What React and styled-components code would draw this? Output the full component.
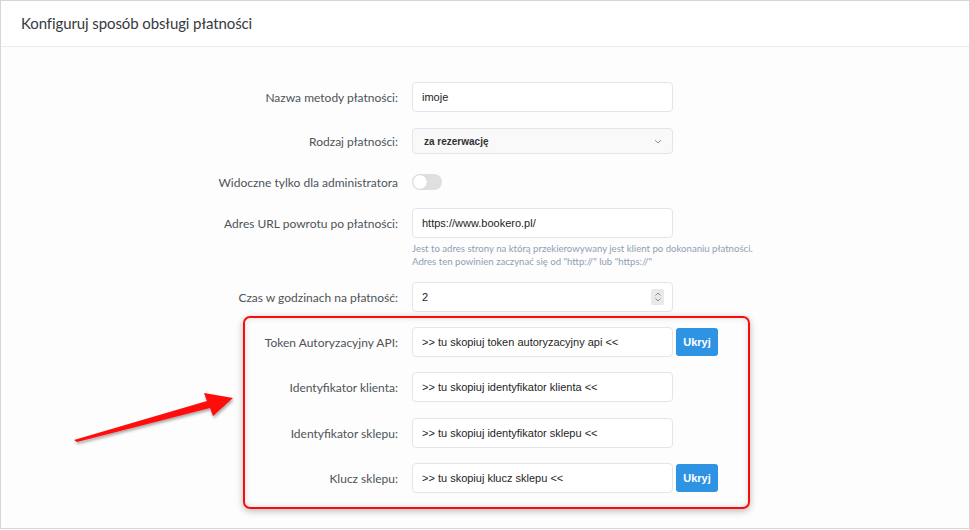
import React from "react";
import styled, { createGlobalStyle } from "styled-components";

const Global = createGlobalStyle`
  html, body { margin: 0; padding: 0; background: #ffffff; }
  body { font-family: "Lato", "Open Sans", sans-serif; }
  * { box-sizing: border-box; }
`;

const Card = styled.div`
  position: relative;
  width: 970px;
  height: 529px;
  border: 1px solid #d6d6d6;
  background: #fdfdfd;
  overflow: hidden;
`;

const Header = styled.div`
  height: 46px;
  display: flex;
  align-items: center;
  padding: 0 0 2px 20px;
  border-bottom: 1px solid #ececec;
  background: #fff;
  font-family: "Lato", sans-serif;
  font-size: 15px;
  letter-spacing: -0.1px;
  color: #353a40;
`;

const Body = styled.div`
  display: flex;
  flex-direction: column;
  padding-top: 35px;
`;

const Row = styled.div`
  display: grid;
  grid-template-columns: 397px 261px auto;
  column-gap: 14px;
  align-items: center;
  margin-top: ${(p) => p.$mt || 0}px;
  min-height: ${(p) => p.$h || 30}px;
`;

const Label = styled.label`
  text-align: right;
  font-family: "Lato", sans-serif;
  font-size: 12px;
  color: #4e5358;
`;

const Input = styled.div`
  height: ${(p) => p.$h || 30}px;
  border: 1px solid #e3e5e8;
  border-radius: 4px;
  background: #fff;
  display: flex;
  align-items: center;
  padding: 0 9px;
  font-family: "Liberation Sans", Arial, sans-serif;
  font-size: 11px;
  color: #1e1e1e;
`;

const Select = styled(Input)`
  height: 26px;
  background: #f9f9f9;
  font-weight: bold;
  font-size: 10px;
  color: #333;
  justify-content: space-between;
  padding: 0 10px 0 11px;
`;

const Grow = styled.span`
  flex: 1;
`;

const Spinner = styled.div`
  width: 13px;
  height: 16px;
  background: #e9e9ea;
  border-radius: 2px;
  display: flex;
  align-items: center;
  justify-content: center;
  margin-right: -1px;
`;

const Toggle = styled.div`
  width: 30px;
  height: 16px;
  border-radius: 8px;
  background: #dedfe1;
  padding: 1px;
  display: flex;
`;

const Knob = styled.div`
  width: 14px;
  height: 14px;
  border-radius: 50%;
  background: #fff;
  box-shadow: 0 0 1px rgba(0,0,0,0.2);
`;

const Help = styled.div`
  grid-column: 2 / span 2;
  font-family: "Lato", sans-serif;
  font-size: 9.6px;
  line-height: 13px;
  color: #8ea0b6;
  white-space: nowrap;
`;

const Button = styled.button`
  width: 42px;
  height: 28px;
  margin-left: -11px;
  border: none;
  border-radius: 3px;
  background: #2f93e4;
  color: #fff;
  font-family: "Liberation Sans", Arial, sans-serif;
  font-weight: bold;
  font-size: 11px;
  padding: 0;
`;

const Highlight = styled.div`
  position: absolute;
  left: 242px;
  top: 315px;
  width: 507px;
  height: 193px;
  border: 2px solid #fa0a0a;
  border-radius: 7px;
  box-shadow: 0 2px 7px rgba(0,0,0,0.28), inset 0 0 6px rgba(0,0,0,0.12);
  pointer-events: none;
`;

const Arrow = styled.svg`
  position: absolute;
  left: 0;
  top: 0;
  overflow: visible;
  pointer-events: none;
`;

function Chevron() {
  return (
    <svg width="8" height="5" viewBox="0 0 8 5">
      <path d="M1 1 L4 4 L7 1" fill="none" stroke="#8f9399" strokeWidth="1" />
    </svg>
  );
}

function UpDown() {
  return (
    <svg width="8" height="12" viewBox="0 0 8 12">
      <path d="M1.5 4.5 L4 2 L6.5 4.5 M1.5 7.5 L4 10 L6.5 7.5" fill="none" stroke="#8a8d92" strokeWidth="1" />
    </svg>
  );
}

export default function App() {
  return (
    <>
      <Global />
      <Card>
        <Header>Konfiguruj sposób obsługi płatności</Header>
        <Body>
          <Row>
            <Label>Nazwa metody płatności:</Label>
            <Input>imoje</Input>
          </Row>
          <Row $mt={16} $h={26}>
            <Label>Rodzaj płatności:</Label>
            <Select>
              <Grow>za rezerwację</Grow>
              <Chevron />
            </Select>
          </Row>
          <Row $mt={13}>
            <Label>Widoczne tylko dla administratora</Label>
            <Toggle>
              <Knob />
            </Toggle>
          </Row>
          <Row $mt={11}>
            <Label>Adres URL powrotu po płatności:</Label>
            <Input>https://www.bookero.pl/</Input>
          </Row>
          <Row $mt={4} $h={26}>
            <Help>
              Jest to adres strony na którą przekierowywany jest klient po dokonaniu płatności.
              <br />
              Adres ten powinien zaczynać się od "http://" lub "https://"
            </Help>
          </Row>
          <Row $mt={14}>
            <Label>Czas w godzinach na płatność:</Label>
            <Input>
              <Grow>2</Grow>
              <Spinner>
                <UpDown />
              </Spinner>
            </Input>
          </Row>
          <Row $mt={15}>
            <Label>Token Autoryzacyjny API:</Label>
            <Input>&gt;&gt; tu skopiuj token autoryzacyjny api &lt;&lt;</Input>
            <Button>Ukryj</Button>
          </Row>
          <Row $mt={15}>
            <Label>Identyfikator klienta:</Label>
            <Input>&gt;&gt; tu skopiuj identyfikator klienta &lt;&lt;</Input>
          </Row>
          <Row $mt={16}>
            <Label>Identyfikator sklepu:</Label>
            <Input>&gt;&gt; tu skopiuj identyfikator sklepu &lt;&lt;</Input>
          </Row>
          <Row $mt={15}>
            <Label>Klucz sklepu:</Label>
            <Input>&gt;&gt; tu skopiuj klucz sklepu &lt;&lt;</Input>
            <Button>Ukryj</Button>
          </Row>
        </Body>
        <Highlight />
        <Arrow width="970" height="529" viewBox="0 0 970 529">
          <defs>
            <filter id="sh" x="-20%" y="-50%" width="140%" height="200%">
              <feDropShadow dx="1" dy="2" stdDeviation="1.5" floodColor="#000" floodOpacity="0.35" />
            </filter>
          </defs>
          <polygon
            points="73,439 206,400 203,392 232,397 212,415 209,407 76,441"
            fill="#ff0a0a"
            filter="url(#sh)"
          />
        </Arrow>
      </Card>
    </>
  );
}
